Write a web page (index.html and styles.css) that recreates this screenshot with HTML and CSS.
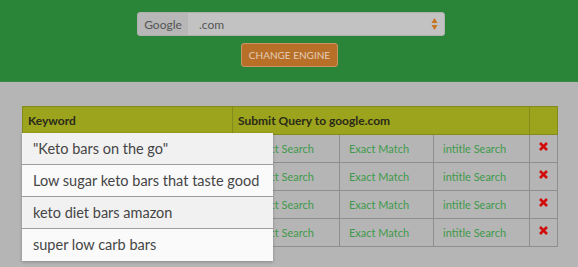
FILE: index.html
```html
<!DOCTYPE html>
<html lang="en">
<head>
  <meta charset="UTF-8" />
  <meta name="viewport" content="width=device-width, initial-scale=1.0" />
  <title>Keyword Query Builder</title>
  <link rel="stylesheet" href="styles.css">
</head>
<body>
  <header class="engine-bar">
    <div class="engine-select">
      <span class="engine-addon">Google</span>
      <span class="engine-value">.com</span>
      <svg class="engine-arrows" width="7" height="14" viewBox="0 0 7 14">
        <path d="M3.5 1 L6.5 6 L0.5 6 Z" fill="#c8731f" />
        <path d="M3.5 13 L6.5 8 L0.5 8 Z" fill="#c8731f" />
      </svg>
    </div>
    <button class="engine-btn">CHANGE ENGINE</button>
  </header>

  <main class="content">
    <div class="table-wrap">
      <table class="query-table">
        <colgroup>
          <col class="w-keyword">
          <col class="w-direct">
          <col class="w-exact">
          <col class="w-title">
          <col class="w-remove">
        </colgroup>
        <thead>
          <tr>
            <th>Keyword</th>
            <th colspan="3">Submit Query to google.com</th>
            <th></th>
          </tr>
        </thead>
        <tbody>
          <tr>
            <td></td>
            <td class="col-direct"><a href="#">Direct Search</a></td>
            <td><a href="#">Exact Match</a></td>
            <td><a href="#">intitle Search</a></td>
            <td class="col-remove"><svg class="remove" width="9" height="9" viewBox="0 0 9 9"><path d="M1 1 L8 8 M8 1 L1 8" stroke="#d30a0a" stroke-width="2.6" /></svg></td>
          </tr>
          <tr>
            <td></td>
            <td class="col-direct"><a href="#">Direct Search</a></td>
            <td><a href="#">Exact Match</a></td>
            <td><a href="#">intitle Search</a></td>
            <td class="col-remove"><svg class="remove" width="9" height="9" viewBox="0 0 9 9"><path d="M1 1 L8 8 M8 1 L1 8" stroke="#d30a0a" stroke-width="2.6" /></svg></td>
          </tr>
          <tr>
            <td></td>
            <td class="col-direct"><a href="#">Direct Search</a></td>
            <td><a href="#">Exact Match</a></td>
            <td><a href="#">intitle Search</a></td>
            <td class="col-remove"><svg class="remove" width="9" height="9" viewBox="0 0 9 9"><path d="M1 1 L8 8 M8 1 L1 8" stroke="#d30a0a" stroke-width="2.6" /></svg></td>
          </tr>
          <tr>
            <td></td>
            <td class="col-direct"><a href="#">Direct Search</a></td>
            <td><a href="#">Exact Match</a></td>
            <td><a href="#">intitle Search</a></td>
            <td class="col-remove"><svg class="remove" width="9" height="9" viewBox="0 0 9 9"><path d="M1 1 L8 8 M8 1 L1 8" stroke="#d30a0a" stroke-width="2.6" /></svg></td>
          </tr>
        </tbody>
      </table>

      <ul class="suggestions">
        <li class="shade">"Keto bars on the go"</li>
        <li>Low sugar keto bars that taste good</li>
        <li class="shade">keto diet bars amazon</li>
        <li>super low carb bars</li>
      </ul>
    </div>
  </main>
</body>
</html>
```

FILE: styles.css
```css
body {
  margin: 0;
  font-family: 'Lato', 'Liberation Sans', sans-serif;
  background-color: #b5b5b5;
  height: 267px;
  overflow: hidden;
}

.engine-bar {
  background-color: #2b8538;
  height: 82px;
  box-sizing: border-box;
  padding-top: 12px;
  display: flex;
  flex-direction: column;
  align-items: center;
  border-bottom: 1px solid #3a8a45;
}

.engine-select {
  width: 308px;
  height: 24px;
  box-sizing: border-box;
  margin-left: 4px;
  display: flex;
  align-items: center;
  background-color: #c2c2c2;
  border: 1px solid #b0b0b0;
  border-radius: 3px;
  font-size: 12px;
  color: #555;
  overflow: hidden;
}

.engine-addon {
  width: 50px;
  height: 100%;
  display: flex;
  align-items: center;
  justify-content: center;
  background-color: #b7b7b7;
  color: #555;
}

.engine-value {
  flex: 1;
  padding-left: 11px;
  color: #555;
}

.engine-arrows {
  margin-right: 6px;
}

.engine-btn {
  margin-top: 7px;
  margin-left: 1px;
  width: 97px;
  height: 24px;
  padding: 0;
  font-family: inherit;
  font-size: 10px;
  color: #e2cdb8;
  background-color: #b87029;
  border: 1px solid #c99366;
  border-radius: 3px;
}

.content {
  padding: 24px 21px 0 22px;
}

.table-wrap {
  position: relative;
  width: 535px;
}

.query-table {
  width: 100%;
  border-collapse: collapse;
  border: 1px solid #8e8e8e;
  font-size: 11px;
  table-layout: fixed;
}

.w-keyword { width: 210px; }
.w-direct { width: 107px; }
.w-exact { width: 94px; }
.w-title { width: 96px; }
.w-remove { width: 28px; }

.query-table th {
  background-color: #9ca31c;
  color: #2a2a1a;
  font-weight: bold;
  text-align: left;
  height: 27px;
  padding: 0 5px;
  border: 1px solid #848a1e;
  font-size: 12px;
}

.query-table td {
  height: 27px;
  padding: 0 9px;
  border: 1px solid #8e8e8e;
  white-space: nowrap;
  overflow: hidden;
}

.query-table td.col-direct {
  padding-left: 16px;
}

.query-table a {
  color: #3f9a4b;
  text-decoration: none;
}

.query-table td.col-remove {
  text-align: center;
  vertical-align: top;
  padding: 7px 0 0 0;
  height: 20px;
}

.remove {
  display: block;
  margin: 0 auto;
}

.suggestions {
  position: absolute;
  top: 27px;
  left: 0;
  width: 251px;
  margin: 0;
  padding: 0;
  list-style: none;
  box-shadow: 0 1px 3px rgba(0, 0, 0, 0.25);
}

.suggestions li {
  height: 31px;
  line-height: 31px;
  padding-left: 11px;
  font-size: 14.5px;
  color: #454545;
  background-color: #fafafa;
  border-bottom: 1px solid #9c9c9c;
}

.suggestions li:last-child {
  border-bottom: none;
  height: 32px;
}

.suggestions li.shade {
  background-color: #f1f1f1;
}
```
